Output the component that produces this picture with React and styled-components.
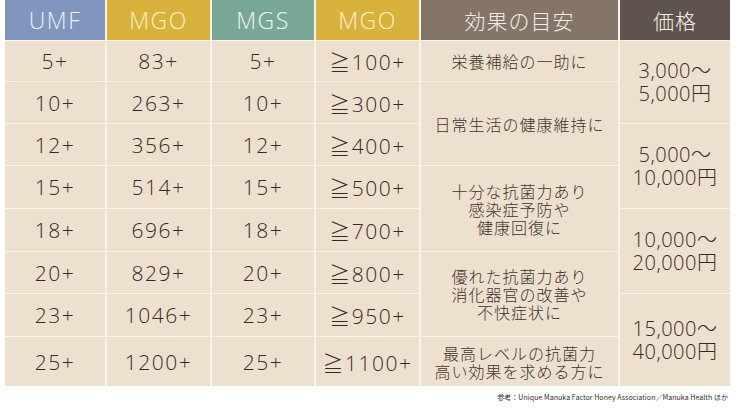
import React from "react";
import styled, { createGlobalStyle } from "styled-components";

const GlobalStyle = createGlobalStyle`
	body {
		margin:0;
		background:#ffffff;
		font-family:"Open Sans", "Noto Sans CJK JP", sans-serif;
	}
`;

const Page = styled.div`
	width:738px;
	height:410px;
	padding-left:5px;
	box-sizing:border-box;
	background:#ffffff;
`;

const Table = styled.div`
	display:grid;
	width:725px;
	grid-template-columns:100px 103px 102px 103px 197px 110px;
	grid-template-rows:40px 40px 41px 41px 42px 42px 41px 42px 49px;
	column-gap:2px;
	row-gap:1px;
	background:#f9f3ea;
`;

const HeadCell = styled.div`
	display:flex;
	align-items:center;
	justify-content:center;
	background:${props => props.bg};
	color:${props => props.fg || "#f3eee8"};
	font-family:"Open Sans", "Noto Sans CJK JP", sans-serif;
	font-weight:300;
	font-size:${props => props.jp ? "21px" : "23px"};
	letter-spacing:${props => props.jp ? "1px" : "1.5px"};
`;

const NumCell = styled.div`
	display:flex;
	align-items:center;
	justify-content:center;
	background:#eee0ce;
	color:#352b24;
	font-family:"Open Sans", "Noto Sans CJK JP", sans-serif;
	font-weight:300;
	font-size:21px;
	letter-spacing:1.5px;
`;

const EffectCell = styled.div`
	display:flex;
	align-items:center;
	justify-content:center;
	text-align:center;
	grid-column:5;
	grid-row:${props => props.rows};
	background:#eee0ce;
	color:#3e342d;
	font-family:"Noto Sans CJK JP", sans-serif;
	font-weight:300;
	font-size:16px;
	line-height:18px;
	letter-spacing:1px;
	white-space:pre-line;
`;

const PriceCell = styled.div`
	display:flex;
	align-items:center;
	justify-content:center;
	text-align:center;
	grid-column:6;
	grid-row:${props => props.rows};
	background:#eee0ce;
	color:#352b24;
	font-family:"Open Sans", "Noto Sans CJK JP", sans-serif;
	font-weight:300;
	font-size:20px;
	line-height:23px;
	letter-spacing:0.5px;
	white-space:pre-line;
`;

const Note = styled.div`
	display:flex;
	justify-content:flex-end;
	width:723px;
	margin-top:6px;
	font-family:"Noto Sans CJK JP", sans-serif;
	font-size:7px;
	color:#2e2a27;
	letter-spacing:0.05px;
`;

const heads = [
	{ label: "UMF", bg: "#8096be", fg: "#eef1f7" },
	{ label: "MGO", bg: "#d8b23d", fg: "#fbf3c6" },
	{ label: "MGS", bg: "#79a797", fg: "#eef6f0" },
	{ label: "MGO", bg: "#d8b23d", fg: "#fbf3c6" },
	{ label: "効果の目安", bg: "#857569", jp: true },
	{ label: "価格", bg: "#5e544d", jp: true }
];

const rows = [
	["5+", "83+", "5+", "≧100+"],
	["10+", "263+", "10+", "≧300+"],
	["12+", "356+", "12+", "≧400+"],
	["15+", "514+", "15+", "≧500+"],
	["18+", "696+", "18+", "≧700+"],
	["20+", "829+", "20+", "≧800+"],
	["23+", "1046+", "23+", "≧950+"],
	["25+", "1200+", "25+", "≧1100+"]
];

const effects = [
	{ rows: "2", text: "栄養補給の一助に" },
	{ rows: "3 / span 2", text: "日常生活の健康維持に" },
	{ rows: "5 / span 2", text: "十分な抗菌力あり\n感染症予防や\n健康回復に" },
	{ rows: "7 / span 2", text: "優れた抗菌力あり\n消化器官の改善や\n不快症状に" },
	{ rows: "9", text: "最高レベルの抗菌力\n高い効果を求める方に" }
];

const prices = [
	{ rows: "2 / span 2", text: "3,000〜\n5,000円" },
	{ rows: "4 / span 2", text: "5,000〜\n10,000円" },
	{ rows: "6 / span 2", text: "10,000〜\n20,000円" },
	{ rows: "8 / span 2", text: "15,000〜\n40,000円" }
];

const App = () => (
	<>
		<GlobalStyle />
		<Page>
			<Table>
				{heads.map((h, i) => (
					<HeadCell key={i} bg={h.bg} fg={h.fg} jp={h.jp}>{h.label}</HeadCell>
				))}
				{rows.map((r, ri) =>
					r.map((v, ci) => (
						<NumCell key={ri + "-" + ci} style={{ gridRow: ri + 2, gridColumn: ci + 1 }}>{v}</NumCell>
					))
				)}
				{effects.map((e, i) => (
					<EffectCell key={"e" + i} rows={e.rows}>{e.text}</EffectCell>
				))}
				{prices.map((p, i) => (
					<PriceCell key={"p" + i} rows={p.rows}>{p.text}</PriceCell>
				))}
			</Table>
			<Note>参考：Unique Manuka Factor Honey Association／Manuka Health ほか</Note>
		</Page>
	</>
);

export default App;
